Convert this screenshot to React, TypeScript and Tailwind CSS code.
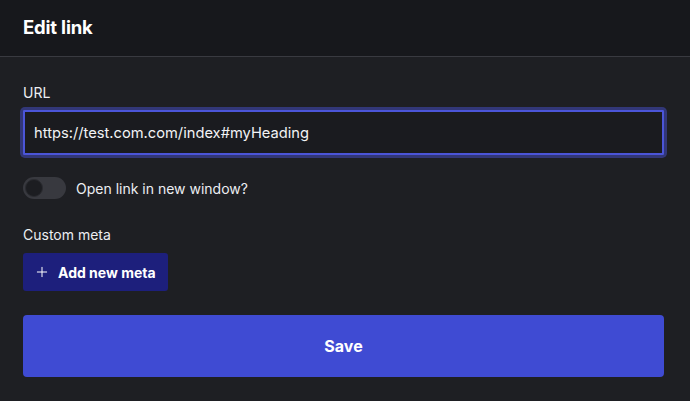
import { Plus } from "lucide-react";

export default function App() {
  return (
    <div className="flex h-[401px] w-[690px] flex-col bg-[#1e1f23] font-['Inter',sans-serif] text-[#eceef2]">
      <div className="flex h-[57px] items-center border-b border-[#393a40] bg-[#17181c] px-[23px]">
        <h1 className="text-[18.5px] font-bold tracking-[-0.2px] text-white">Edit link</h1>
      </div>
      <div className="flex flex-col px-[23px] pt-[26px]">
        <label className="text-[14px] leading-[20px]">URL</label>
        <div className="mt-[7px] mr-[3px] rounded-[2px] ring-[3px] ring-[#3a429c]/70">
          <input
            readOnly
            value="https://test.com.com/index#myHeading"
            className="h-[45px] w-full rounded-[1px] border-2 border-[#4b55d8] bg-[#1a1b1f] px-[9px] text-[14.7px] text-[#f2f3f5] outline-none"
          />
        </div>
        <div className="mt-[22px] flex items-center gap-[10px]">
          <div className="flex h-[22px] w-[43px] items-center rounded-full bg-[#38393f] px-[2px]">
            <div className="h-[18px] w-[18px] rounded-full border border-[#2a2b30] bg-[#1c1d21]" />
          </div>
          <span className="text-[14px]">Open link in new window?</span>
        </div>
        <div className="mt-[26px] text-[14px] leading-[20px]">Custom meta</div>
        <div className="mt-[8px]">
          <button className="flex h-[38px] items-center gap-[8px] rounded-[3px] bg-[#1d1f7c] pl-[11px] pr-[12px] text-[14px] font-bold text-white">
            <Plus size={16} strokeWidth={1.5} />
            Add new meta
          </button>
        </div>
        <button className="mt-[24px] mr-[3px] flex h-[62px] items-center justify-center rounded-[4px] bg-[#3f4bd3] text-[16px] font-bold text-white">
          Save
        </button>
      </div>
    </div>
  );
}
